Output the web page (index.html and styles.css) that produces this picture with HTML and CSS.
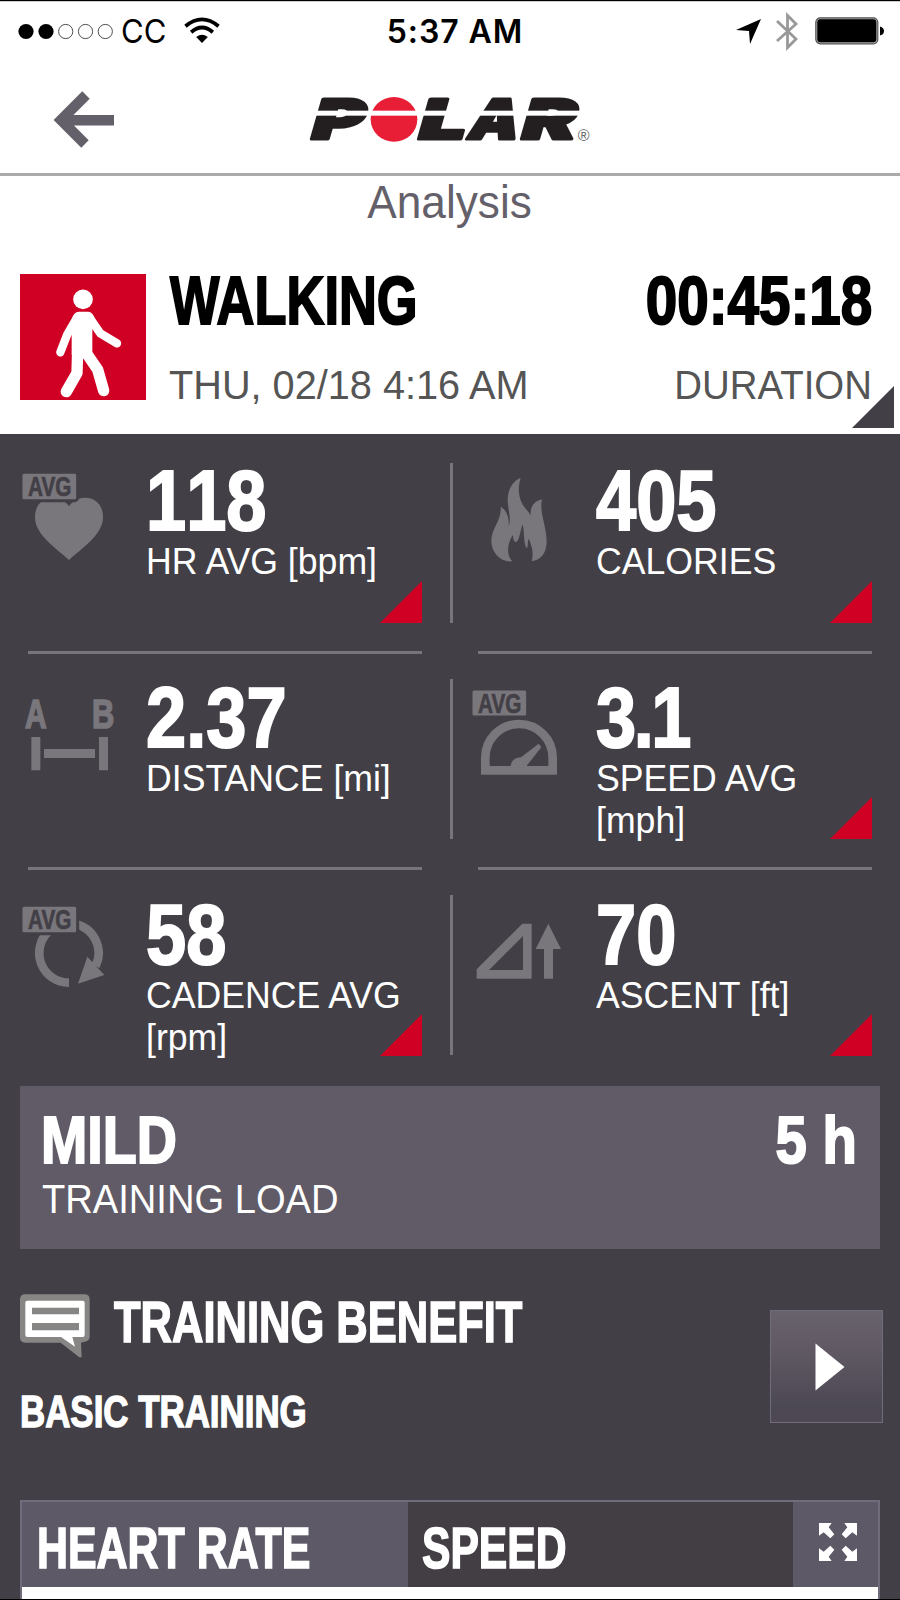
FILE: index.html
```html
<!DOCTYPE html>
<html lang="en">
<head>
<meta charset="UTF-8">
<meta name="viewport" content="width=device-width, initial-scale=1">
<title>Analysis</title>
<link rel="stylesheet" href="styles.css">
</head>
<body>
<div class="statusbar">
  <div class="carrier">
    <svg width="96" height="17" viewBox="0 0 96 17">
      <circle cx="8" cy="8.5" r="7.6"/><circle cx="28" cy="8.5" r="7.6"/>
      <g fill="none" stroke="#222" stroke-width="0.8"><circle cx="47.7" cy="8.5" r="7.1"/><circle cx="67.5" cy="8.5" r="7.1"/><circle cx="87.3" cy="8.5" r="7.1"/></g>
    </svg>
    <span class="cc">CC</span>
    <svg class="wifi" width="36" height="26" viewBox="0 0 36 26">
      <path d="M1.5 8.2Q18 -5.4 34.5 8.2M7.2 14.2Q18 4.8 28.8 14.2" fill="none" stroke="#000" stroke-width="3.8"/>
      <path d="M12.2 19Q18 14.4 23.8 19L18 25Z"/>
    </svg>
  </div>
  <div class="clock">5:37 AM</div>
  <div class="indicators">
    <svg width="25" height="25" viewBox="0 0 25 25"><path d="M25 0L14 25L13 12L0 11Z"/></svg>
    <svg class="bt" width="22" height="39" viewBox="0 0 22 39"><path d="M1 9L20 27L11.5 35.5V3.5L20 12L1 29" fill="none" stroke="#999" stroke-width="2.8"/></svg>
    <svg width="70" height="28" viewBox="0 0 70 28"><rect x="0.8" y="0.8" width="62" height="26" rx="4.5" fill="#aaa" stroke="#555" stroke-width="1.2"/><rect x="2.3" y="2.3" width="59" height="23" rx="3"/><path d="M65 9.5Q69 10.5 69 14T65 18.5Z"/></svg>
  </div>
</div>

<header class="topbar">
  <svg class="back" width="60" height="56" viewBox="0 0 60 56"><path d="M31 3L6 28L30 52M7 28.3H59" fill="none" stroke="#646069" stroke-width="10.5"/></svg>
  <svg class="logo" width="280" height="48" viewBox="933 286 840 144">
    <g class="logo-text">
      <text transform="translate(925 419) skewX(-16)" textLength="156" lengthAdjust="spacingAndGlyphs">P</text>
      <text transform="translate(1246 419) skewX(-16)" textLength="142" lengthAdjust="spacingAndGlyphs">L</text>
      <text transform="translate(1396 419) skewX(-16)" textLength="150" lengthAdjust="spacingAndGlyphs">A</text>
      <text transform="translate(1555 419) skewX(-16)" textLength="162" lengthAdjust="spacingAndGlyphs">R</text>
    </g>
    <ellipse cx="1182" cy="359" rx="70" ry="67" fill="#e81e36"/>
    <rect x="930" y="333" width="810" height="15" fill="#fff"/>
    <text class="logo-reg" x="1733" y="423">®</text>
  </svg>
</header>

<h1 class="page-title"><span>Analysis</span></h1>

<section class="activity">
  <svg class="sport" width="126" height="126" viewBox="60 103 378 378">
    <rect x="60" y="103" width="378" height="378" fill="#d00024"/>
    <circle cx="249" cy="179" r="29.5" fill="#fff"/>
    <path d="M215 240Q222 216 236 216H264Q275 216 283 232L277 262V345H215Z" fill="#fff"/>
    <g fill="none" stroke="#fff" stroke-linecap="round" stroke-linejoin="round">
      <path d="M232 232L202 284L181 338M267 232L301 281L351 311" stroke-width="25"/>
      <path d="M233 330L231 400L199 456M254 333L293 390L311 453" stroke-width="34"/>
    </g>
  </svg>
  <div class="activity-name">
    <div class="headline"><span class="name">WALKING</span></div>
    <div class="sub"><span class="date">THU, 02/18 4:16 AM</span></div>
  </div>
  <div class="activity-time">
    <div class="headline"><span class="time">00:45:18</span></div>
    <div class="sub"><span class="dur">DURATION</span></div>
  </div>
  <i class="corner"></i>
</section>

<main>
<section class="metrics">
  <div class="row">
    <div class="metric">
      <svg class="icon" viewBox="66 99 300 300">
        <path d="M207 360C170 325 105 286 105 231C105 195 128 173 159 173C181 173 198 184 207 199C216 184 233 173 255 173C286 173 309 195 309 231C309 286 244 325 207 360Z"/>
        <rect class="badge" x="63" y="97" width="170" height="85" rx="9"/>
        <text class="avg" x="84" y="168" textLength="130" lengthAdjust="spacingAndGlyphs">AVG</text>
      </svg>
      <div class="data"><div class="value">118</div><div class="label">HR AVG [bpm]</div></div>
      <i class="corner"></i>
    </div>
    <div class="divider"></div>
    <div class="metric">
      <svg class="icon" viewBox="66 99 300 300">
        <path d="M212 113C203 145 205 168 217 192C227 209 237 215 242 227C240 200 252 184 276 178C267 218 290 258 290 304C290 343 270 360 245 364C252 335 245 320 237 296C231 305 236 319 230 325C220 312 224 280 218 253C209 279 208 304 197 307C189 301 190 294 188 285C171 314 169 345 187 364C153 367 124 338 124 302C124 265 156 239 152 200C169 211 178 230 176 258C185 235 173 207 173 181C173 148 188 123 212 113Z"/>
      </svg>
      <div class="data"><div class="value">405</div><div class="label">CALORIES</div></div>
      <i class="corner"></i>
    </div>
  </div>
  <div class="row">
    <div class="metric">
      <svg class="icon" viewBox="66 90 300 300">
        <text class="ab" x="75" y="204" textLength="65" lengthAdjust="spacingAndGlyphs">A</text>
        <text class="ab" x="276" y="204" textLength="67" lengthAdjust="spacingAndGlyphs">B</text>
        <path d="M94 231h27v100h-27zM132 267h153v27h-153zM297 231h27v100h-27z"/>
      </svg>
      <div class="data"><div class="value">2.37</div><div class="label">DISTANCE [mi]</div></div>
    </div>
    <div class="divider"></div>
    <div class="metric">
      <svg class="icon" viewBox="66 90 300 300">
        <path class="line" d="M106 331V293A101 101 0 0 1 308 293V331Z"/>
        <path d="M181 322C183 302 195 293 213 292L266 251L274 262L231 316V322Z"/>
        <rect class="badge" x="63" y="87" width="170" height="84" rx="9"/>
        <text class="avg" x="84" y="158" textLength="130" lengthAdjust="spacingAndGlyphs">AVG</text>
      </svg>
      <div class="data"><div class="value tight">3.1</div><div class="label">SPEED AVG [mph]</div></div>
      <i class="corner"></i>
    </div>
  </div>
  <div class="row">
    <div class="metric">
      <svg class="icon" viewBox="66 81 300 300">
        <path class="line" d="M207 308A89 89 0 0 1 147 153M225 132A89 89 0 0 1 287 258"/>
        <path d="M262 230L234 311L313 285L297 268Z"/>
        <rect class="badge" x="63" y="76" width="170" height="85" rx="9"/>
        <text class="avg" x="84" y="147" textLength="130" lengthAdjust="spacingAndGlyphs">AVG</text>
      </svg>
      <div class="data"><div class="value">58</div><div class="label">CADENCE AVG [rpm]</div></div>
      <i class="corner"></i>
    </div>
    <div class="divider"></div>
    <div class="metric">
      <svg class="icon" viewBox="66 81 300 300">
        <path fill-rule="evenodd" d="M80 296V268L217 131H245V296ZM117 270H219V168Z"/>
        <path d="M295 131L333 207H309V296H282V207H257Z"/>
      </svg>
      <div class="data"><div class="value">70</div><div class="label">ASCENT [ft]</div></div>
      <i class="corner"></i>
    </div>
  </div>
</section>

<section class="load">
  <div class="load-top"><span class="mild">MILD</span><span class="hours">5 h</span></div>
  <div class="load-label"><span>TRAINING LOAD</span></div>
</section>

<section class="benefit">
  <div>
    <h2>
      <svg width="70" height="64" viewBox="60 71 210 192">
        <path d="M76 72H253Q269 72 269 88V201Q269 214 243 217L245 261H238L182 217H76Q60 217 60 201V88Q60 72 76 72Z" fill="#878685"/>
        <path d="M82 91H248Q254 91 254 97V194Q254 200 248 200H217L225 229L183 200H82Q76 200 76 194V97Q76 91 82 91Z" fill="#fff"/>
        <path d="M96 112h141v20h-141zM96 158h141v22h-141z" fill="#878685"/>
      </svg>
      <span>TRAINING BENEFIT</span>
    </h2>
    <h3><span>BASIC TRAINING</span></h3>
  </div>
  <button class="play" aria-label="Open"><svg width="30" height="48" viewBox="0 0 30 48"><path d="M0.5 0.5L29.5 24L0.5 47.5Z" fill="#fff"/></svg></button>
</section>

<section class="chart">
  <nav class="tabs">
    <div class="tab active"><span class="hr">HEART RATE</span></div>
    <div class="tab"><span class="sp">SPEED</span></div>
    <div class="expand">
      <svg width="38" height="38" viewBox="0 0 114 114">
        <path fill="#fff" d="M0 0H38L29 13L46 34L34 46L14 28L0 38ZM114 0V38L100 28L80 46L68 34L85 13L76 0ZM0 114V76L14 86L34 68L46 80L29 101L38 114ZM114 114H76L85 101L68 80L80 68L100 86L114 76Z"/>
      </svg>
    </div>
  </nav>
</section>
</main>
</body>
</html>
```

FILE: styles.css
```css
* { box-sizing: border-box; }
body { margin: 0; width: 900px; height: 1600px; overflow: hidden; background: #fff; font-family: "Liberation Sans", Arial, sans-serif; border-top: 1px solid #000; border-bottom: 1px solid #000; }
svg { display: block; flex: none; overflow: visible; }
span { display: inline-block; transform-origin: left; white-space: nowrap; }
h1, h2, h3 { margin: 0; }

/* status bar */
.statusbar { height: 59px; display: grid; grid-template-columns: 340px 1fr 340px; align-items: center; border-top: 1px solid #ccc; font-family: Inter, sans-serif; }
.carrier { display: flex; align-items: center; padding-left: 18px; }
.cc { font-size: 33px; font-weight: 400; transform: scaleX(0.94); margin-left: 7px; }
.wifi { margin-left: 15px; }
.clock { text-align: center; font-size: 32px; font-weight: 600; letter-spacing: 0.9px; padding-left: 10px; white-space: nowrap; }
.indicators { display: flex; align-items: center; justify-content: flex-end; padding-right: 15px; }
.bt { margin: 0 17px 0 15px; }

/* header */
.topbar { height: 116px; display: flex; align-items: flex-start; border-bottom: 3px solid #aaa; }
.back { margin: 32px 0 0 55px; }
.logo { margin: 35px 0 0 196px; }
.logo-text { font-family: Inter, sans-serif; font-weight: 900; font-size: 165px; fill: #231f20; stroke: #231f20; stroke-width: 9; stroke-linejoin: round; }
.logo-reg { font-size: 48px; fill: #666; }
.page-title { height: 52px; line-height: 53px; font-size: 46.5px; font-weight: normal; text-align: center; color: #646069; }
.page-title span { transform: scaleX(0.95); transform-origin: center; }

/* activity summary */
.activity { position: relative; display: flex; height: 206px; padding: 42px 28px 0 20px; }
.sport { margin-top: 4px; }
.activity-name { margin-left: 23px; flex: 1; }
.activity-time { text-align: right; }
.headline { font-size: 69px; line-height: 61px; font-weight: bold; -webkit-text-stroke: 2px #000; height: 60px; }
.sub { margin-top: 33px; font-size: 40px; line-height: 44px; color: #555; }
.name { transform: scaleX(0.76); margin-left: 1px; }
.date { transform: scaleX(0.992); }
.time, .dur { transform-origin: right; }
.time { transform: scaleX(0.82); }
.dur { transform: scaleX(0.96); }
.corner { position: absolute; right: 0; bottom: 28px; width: 42px; height: 42px; background: #d00024; clip-path: polygon(100% 0, 100% 100%, 0 100%); }
.activity .corner { right: 6px; bottom: 6px; background: #423f46; }

/* metrics */
main { background: #423f46; color: #fff; height: 1165px; overflow: hidden; }
.metrics { padding-top: 4px; height: 652px; }
.row { display: flex; height: 216px; }
.metric { position: relative; display: flex; width: 394px; margin-left: 28px; padding-top: 28px; border-bottom: 3px solid #78757b; }
.divider { width: 3px; height: 160px; margin: 25px 0 0 28px; background: #78757b; }
.divider + .metric { margin-left: 25px; }
.row:nth-child(2) .metric { padding-top: 29px; }
.row:nth-child(3) .metric { padding-top: 30px; border-bottom-color: transparent; }
.row:nth-child(3) .corner { bottom: 27px; }
.icon { width: 100px; height: 100px; margin: 7px 18px 0 -6px; fill: #79767c; }
.icon .line { fill: none; stroke: #79767c; stroke-width: 26; }
.badge { stroke: #423f46; stroke-width: 9; }
.avg { fill: #423f46; font-size: 81px; font-weight: bold; stroke: #423f46; stroke-width: 2; }
.ab { font-size: 124px; font-weight: bold; stroke: #79767c; stroke-width: 5; }
.data { margin-left: 6px; }
.value { font-size: 85px; line-height: 70px; font-weight: bold; font-kerning: none; transform: scaleX(0.85); transform-origin: left; -webkit-text-stroke: 2px #fff; }
.value.tight { letter-spacing: -3px; }
.label { margin-top: 4px; width: 290px; font-size: 37.5px; line-height: 42px; transform: scaleX(0.95); transform-origin: left; }

/* training load */
.load { margin: 0 20px; height: 163px; padding: 20px 23px 0; background: #605b67; }
.load-top { display: flex; justify-content: space-between; font-size: 67px; line-height: 68px; font-weight: bold; -webkit-text-stroke: 2px #fff; }
.mild { transform: scaleX(0.83); margin-left: -2px; }
.hours { transform: scaleX(0.84); transform-origin: right; }
.load-label { font-size: 40px; line-height: 44px; margin-top: 3px; }
.load-label span { transform: scaleX(0.953); margin-left: -1px; }

/* training benefit */
.benefit { display: flex; justify-content: space-between; align-items: flex-start; height: 251px; padding: 45px 17px 0 20px; }
.benefit h2 { display: flex; height: 70px; font-size: 58px; line-height: 56px; -webkit-text-stroke: 1.6px #fff; }
.benefit h2 span { margin-left: 24px; width: 500px; transform: scaleX(0.75); }
.benefit h3 { font-size: 45px; line-height: 50px; margin-top: 23px; -webkit-text-stroke: 1.4px #fff; }
.benefit h3 span { transform: scaleX(0.775); }
.play { width: 113px; height: 113px; margin-top: 16px; padding: 0 0 0 7px; border: 1px solid #716c7c; background: linear-gradient(#68626c, #625b65 30%, #4b4753 88%, #504854); display: flex; align-items: center; justify-content: center; }

/* chart */
.chart { margin: 0 20px; height: 120px; border: 2px solid #716c7c; background: #fff; }
.tabs { display: flex; height: 85px; background: #433d44; }
.tab { width: 385px; padding-left: 14px; font-size: 58px; line-height: 91px; font-weight: bold; -webkit-text-stroke: 1.6px #fff; }
.tab.active { width: 386px; padding-left: 15px; background: #5e5967; }
.hr { transform: scaleX(0.74); }
.sp { transform: scaleX(0.735); }
.expand { flex: 1; background: #5e5967; padding: 21px 0 0 26px; }
```
